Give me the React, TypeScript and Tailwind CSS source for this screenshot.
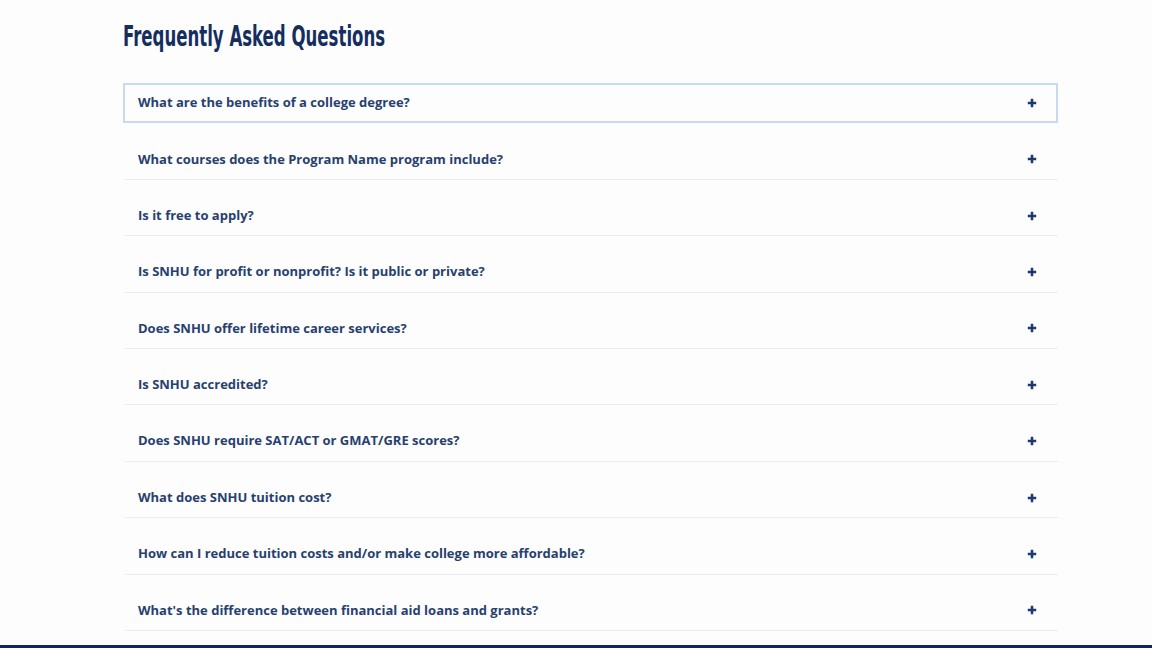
import { useState } from "react";

const questions = [
  "What are the benefits of a college degree?",
  "What courses does the Program Name program include?",
  "Is it free to apply?",
  "Is SNHU for profit or nonprofit? Is it public or private?",
  "Does SNHU offer lifetime career services?",
  "Is SNHU accredited?",
  "Does SNHU require SAT/ACT or GMAT/GRE scores?",
  "What does SNHU tuition cost?",
  "How can I reduce tuition costs and/or make college more affordable?",
  "What's the difference between financial aid loans and grants?",
];

const PlusIcon = () => (
  <svg width="10" height="10" viewBox="0 0 10 10" className="text-[#1e3a6c]">
    <path d="M5 0.8v8.4M0.8 5h8.4" stroke="currentColor" strokeWidth="2.5" />
  </svg>
);

export default function App() {
  const [focused, setFocused] = useState(0);

  return (
    <div className="w-[1152px] h-[648px] bg-[#fdfdfd] flex flex-col overflow-hidden">
      <div className="flex-1 pl-[123px] pr-[94px]">
        <h2 className="pt-[19px] h-[67px] text-[#142e5e] text-[29px] font-bold leading-[34px] whitespace-nowrap [font-family:'DejaVu_Sans_Condensed','DejaVu_Sans',sans-serif] scale-x-[0.635] origin-left">
          Frequently Asked Questions
        </h2>
        <div className="flex flex-col">
          {questions.map((q, i) => (
            <div key={i} className={`h-[56.4px] ${i === 0 ? "pt-[16px]" : "pt-[16.4px]"}`}>
              <button
                onClick={() => setFocused(i)}
                className={`h-[40px] flex items-center justify-between text-left ${
                  focused === i
                    ? "w-full border-2 border-[#c8daf2] pl-[13px] pr-[19px]"
                    : "w-[933px] ml-[2px] border-b border-[#ececec] pl-[13px] pr-[21px]"
                }`}
              >
                <span className="text-[#27416f] text-[13px] font-bold [font-family:'Open_Sans',sans-serif]">
                  {q}
                </span>
                <PlusIcon />
              </button>
            </div>
          ))}
        </div>
      </div>
      <div className="h-[3px] bg-[#0f2a5a]" />
    </div>
  );
}
